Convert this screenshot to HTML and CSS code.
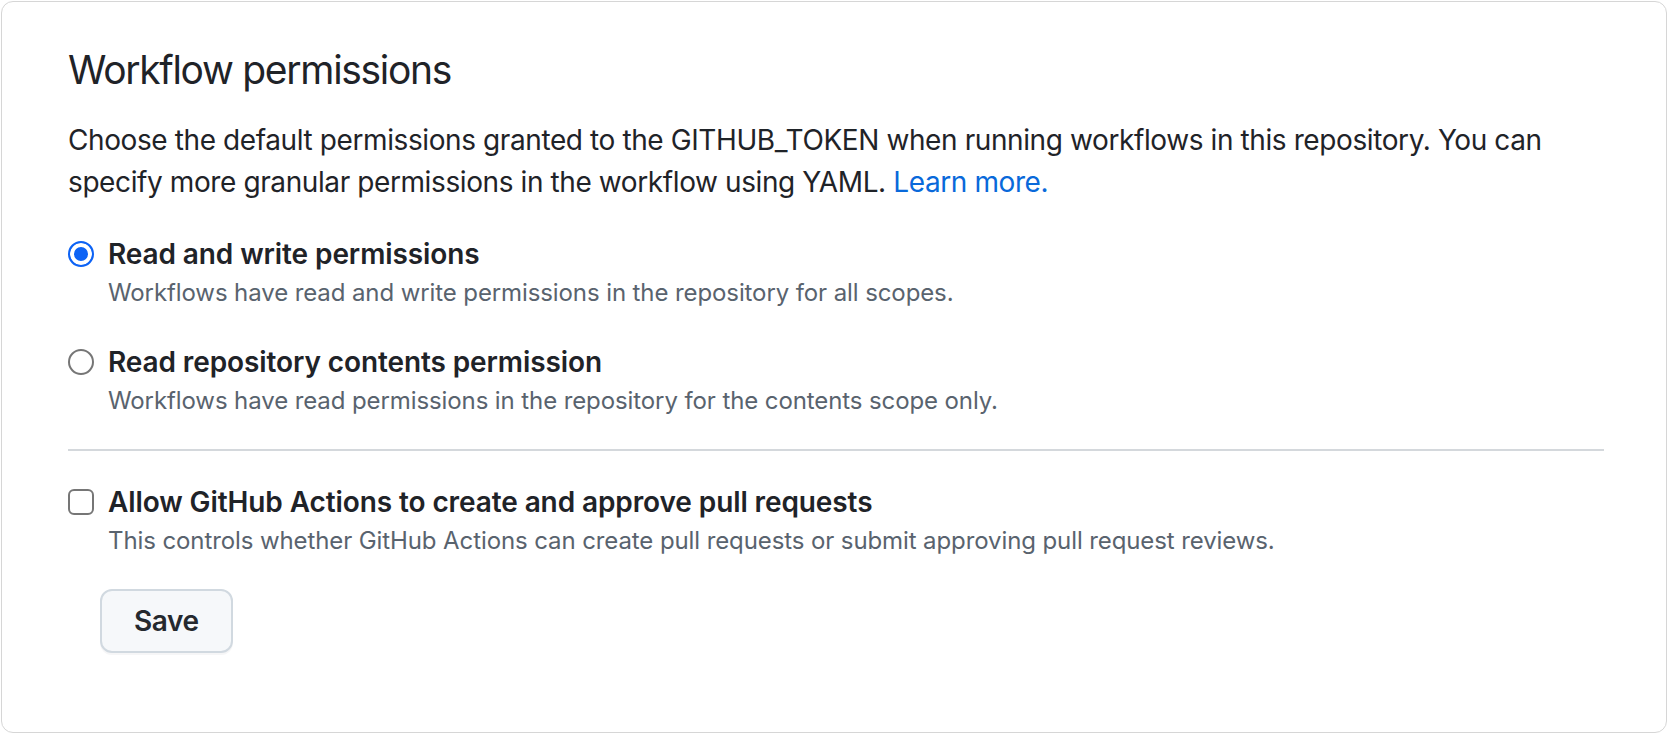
FILE: index.html
```html
<!DOCTYPE html>
<html>
<head>
  <meta charset="utf-8">
  <title>Workflow permissions</title>
  <link rel="stylesheet" href="styles.css">
</head>
<body>
  <div class="panel">
    <h2 class="panel-title">Workflow permissions</h2>
    <p class="panel-intro">Choose the default permissions granted to the GITHUB_TOKEN when running workflows in this repository. You can specify more granular permissions in the workflow using YAML. <a href="#" class="link">Learn more.</a></p>

    <label class="option">
      <input type="radio" name="perm" class="radio" checked>
      <span class="option-text">
        <span class="option-label">Read and write permissions</span>
        <span class="option-note">Workflows have read and write permissions in the repository for all scopes.</span>
      </span>
    </label>

    <label class="option">
      <input type="radio" name="perm" class="radio">
      <span class="option-text">
        <span class="option-label">Read repository contents permission</span>
        <span class="option-note">Workflows have read permissions in the repository for the contents scope only.</span>
      </span>
    </label>

    <hr class="divider">

    <label class="option">
      <input type="checkbox" class="checkbox">
      <span class="option-text">
        <span class="option-label">Allow GitHub Actions to create and approve pull requests</span>
        <span class="option-note">This controls whether GitHub Actions can create pull requests or submit approving pull request reviews.</span>
      </span>
    </label>

    <div class="actions">
      <button class="btn">Save</button>
    </div>
  </div>
</body>
</html>
```

FILE: styles.css
```css
body {
    margin: 0;
    background-color: #fff;
    font-family: Inter, "Liberation Sans", sans-serif;
    color: #1f2328;
}
.panel {
    margin: 1px;
    min-height: calc(100vh - 2px);
    box-sizing: border-box;
    border: 1px solid #d6d6d6;
    border-radius: 12px;
    padding: 43px 62px 0 66px;
}
.panel-title {
    margin: 0 0 24px;
    font-size: 39px;
    line-height: 50px;
    font-weight: 400;
    letter-spacing: -1.3px;
}
.panel-intro {
    margin: 0;
    font-size: 28px;
    line-height: 42px;
    letter-spacing: -0.4px;
}
.link {
    color: #0969da;
    text-decoration: none;
}
.option {
    display: flex;
    align-items: flex-start;
    gap: 14px;
    margin: 30px 0;
}
.option-text {
    display: flex;
    flex-direction: column;
}
.option-label {
    font-size: 28px;
    line-height: 42px;
    font-weight: 600;
    letter-spacing: -0.1px;
}
.option-note {
    font-size: 24px;
    line-height: 36px;
    color: #59636e;
    letter-spacing: -0.1px;
}
.radio,
.checkbox {
    appearance: none;
    flex: none;
    width: 26px;
    height: 26px;
    margin: 8px 0 0;
    box-sizing: border-box;
    border: 2px solid #767676;
    background-color: #fff;
}
.radio {
    border-radius: 50%;
}
.radio:checked {
    border-color: #0d63f5;
    background-color: #0d63f5;
    box-shadow: inset 0 0 0 4px #fff;
}
.checkbox {
    border-radius: 6px;
}
.divider {
    margin: 30px 0;
    height: 2px;
    border: 0;
    background-color: #d4d8dc;
}
.actions {
    margin: 30px 0 0 32px;
}
.btn {
    padding: 10px 32px;
    font-family: inherit;
    font-size: 28px;
    line-height: 40px;
    font-weight: 600;
    letter-spacing: -0.4px;
    color: #25292e;
    background-color: #f6f8fa;
    border: 2px solid #d1d9e0;
    border-radius: 12px;
    box-shadow: 0 2px 0 rgba(31, 35, 40, 0.04);
}
```
